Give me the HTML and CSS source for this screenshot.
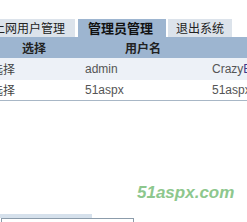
FILE: index.html
```
<!DOCTYPE html>
<html>
<head>
<meta charset="utf-8">
<link rel="stylesheet" href="styles.css">
</head>
<body>
<div class="page">
  <div class="tabs">
    <div class="tab tab-user">上网用户管理</div>
    <div class="tab tab-admin">管理员管理</div>
    <div class="tab tab-exit">退出系统</div>
  </div>
  <div class="grid">
    <div class="hd hd-sel">选择</div>
    <div class="hd hd-name">用户名</div>
    <div class="hd"></div>
    <div class="cell c1 odd">选择</div>
    <div class="cell c2 odd">admin</div>
    <div class="cell c3 odd">Crazy<span class="hl">Boy</span></div>
    <div class="cell c1">选择</div>
    <div class="cell c2">51aspx</div>
    <div class="cell c3">51aspx</div>
  </div>
  <div class="lower">
    <div class="lower-bar"></div>
    <div class="lower-box"></div>
  </div>
</div>
<div class="watermark">51aspx.com</div>
</body>
</html>
```
FILE: styles.css
```
html, body {
  margin: 0;
  padding: 0;
  background: #ffffff;
  overflow: hidden;
  width: 247px;
  height: 222px;
}
body {
  font-family: "Liberation Sans", "Noto Sans CJK SC", sans-serif;
  font-size: 12px;
  color: #555555;
  position: relative;
}
.page {
  padding-top: 19px;
}
.tabs {
  display: flex;
  margin-left: -17px;
  height: 18px;
}
.tab {
  font-family: "Noto Sans CJK SC", sans-serif;
  font-size: 12px;
  line-height: 18px;
  color: #222222;
  background: #dce3eb;
  text-align: center;
  white-space: nowrap;
}
.tab-user {
  width: 92px;
  margin-right: 3px;
}
.tab-admin {
  width: 88px;
  margin-right: 2px;
  background: #9db5d0;
  font-weight: bold;
  font-size: 13px;
  color: #111111;
  text-align: left;
  padding-left: 10px;
  box-sizing: border-box;
}
.tab-exit {
  width: 64px;
}
.grid {
  display: grid;
  grid-template-columns: 96px 127px 60px;
  margin-left: -14px;
  border-bottom: 1px solid #a8b7c6;
}
.hd {
  background: #9db5d0;
  height: 21px;
  line-height: 21px;
  font-family: "Noto Sans CJK SC", sans-serif;
  font-weight: bold;
  color: #222222;
  white-space: nowrap;
}
.hd-sel {
  text-align: center;
}
.hd-name {
  padding-left: 43px;
}
.cell {
  height: 20px;
  line-height: 20px;
  white-space: nowrap;
}
.odd {
  background: #edf1f7;
  height: 22px;
  line-height: 22px;
}
.c1 {
  padding-left: 5px;
  font-family: "Noto Sans CJK SC", sans-serif;
  color: #444444;
}
.c2, .c3 {
  padding-left: 3px;
}
.hl {
  color: #3a3a8c;
}
.lower {
  margin-top: 113px;
}
.lower-bar {
  width: 92px;
  height: 4px;
  background: #d6e1ec;
}
.lower-box {
  margin-left: 1px;
  width: 131px;
  height: 12px;
  border: 1px solid #8c9cab;
  background: #ffffff;
}
.watermark {
  position: absolute;
  left: 137px;
  top: 184px;
  font-family: "Liberation Sans", sans-serif;
  font-size: 17px;
  line-height: 17px;
  font-weight: bold;
  font-style: italic;
  color: #8dc78d;
}
```
